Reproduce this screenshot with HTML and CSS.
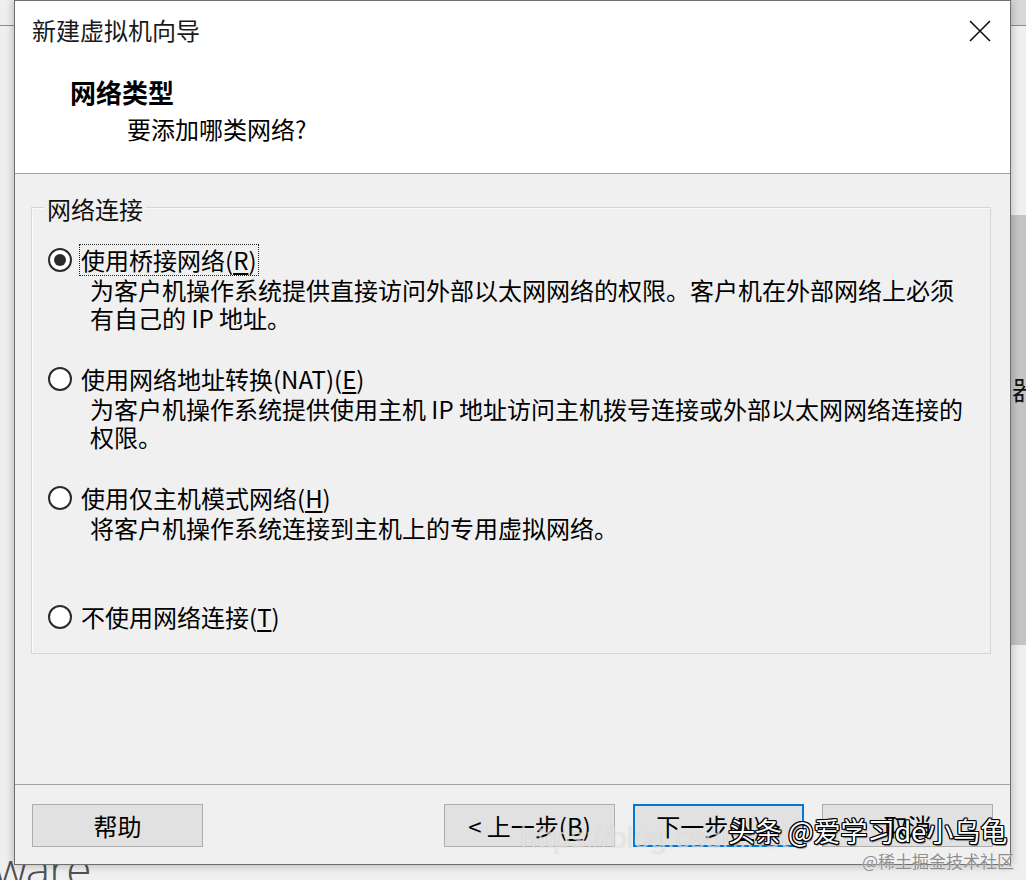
FILE: index.html
```html
<!DOCTYPE html>
<html lang="zh-CN">
<head>
<meta charset="utf-8">
<title>新建虚拟机向导</title>
<link rel="stylesheet" href="styles.css">
</head>
<body>
<div class="desktop">
  <div class="bg-top-right"></div>
  <div class="bg-line bg-line-left"></div>
  <div class="bg-line bg-line-right"></div>
  <div class="bg-panel-right"></div>
  <div class="bg-glyph">器</div>
  <div class="bg-logo">mware</div>

  <div class="dialog">
    <header class="header">
      <div class="titlebar">
        <span class="title">新建虚拟机向导</span>
        <span class="close" aria-label="关闭">
          <svg width="22" height="22" viewBox="0 0 22 22"><path d="M1 1 L21 21 M21 1 L1 21" stroke="#111" stroke-width="1.6" fill="none"/></svg>
        </span>
      </div>
      <h1 class="heading">网络类型</h1>
      <p class="subheading">要添加哪类网络?</p>
    </header>

    <main class="body">
      <div class="group">
        <div class="group-title">网络连接</div>
        <div class="options">
          <div class="option">
            <div class="option-row"><span class="radio checked"></span><span class="label focus">使用桥接网络(<u>R</u>)</span></div>
            <p class="desc">为客户机操作系统提供直接访问外部以太网网络的权限。客户机在外部网络上必须<br>有自己的 IP 地址。</p>
          </div>
          <div class="option">
            <div class="option-row"><span class="radio"></span><span class="label">使用网络地址转换(NAT)(<u>E</u>)</span></div>
            <p class="desc">为客户机操作系统提供使用主机 IP 地址访问主机拨号连接或外部以太网网络连接的<br>权限。</p>
          </div>
          <div class="option">
            <div class="option-row"><span class="radio"></span><span class="label">使用仅主机模式网络(<u>H</u>)</span></div>
            <p class="desc">将客户机操作系统连接到主机上的专用虚拟网络。</p>
          </div>
          <div class="option last">
            <div class="option-row"><span class="radio"></span><span class="label">不使用网络连接(<u>T</u>)</span></div>
          </div>
        </div>
      </div>
    </main>

    <footer class="footer">
      <button class="btn">帮助</button>
      <span class="spacer"></span>
      <button class="btn">&lt; 上一步(<u>B</u>)</button>
      <button class="btn primary">下一步(<u>N</u>) &gt;</button>
      <button class="btn">取消</button>
    </footer>
  </div>

  <div class="wm wm-csdn">https://blog.csdn.net</div>
  <div class="wm wm-toutiao">头条 @爱学习de小乌龟</div>
  <div class="wm wm-juejin">@稀土掘金技术社区</div>
</div>
</body>
</html>
```

FILE: styles.css
```css
* { box-sizing: border-box; }

html, body {
  margin: 0;
  padding: 0;
}

body {
  width: 1026px;
  height: 880px;
  overflow: hidden;
  background: #ececec;
  font-family: "Noto Sans CJK SC", "Noto Sans", sans-serif;
  color: #000;
}

.desktop {
  position: relative;
  width: 1026px;
  height: 880px;
  overflow: hidden;
  background: #efefef;
}

/* background window pieces behind the dialog */
.bg-top-right {
  position: absolute;
  left: 1000px;
  top: 0;
  width: 26px;
  height: 25px;
  background: #d8d8d8;
}
.bg-line {
  position: absolute;
  top: 25px;
  height: 1px;
  background: #8c8c8c;
}
.bg-line-left { left: 0; width: 20px; }
.bg-line-right { left: 1000px; width: 26px; }

.bg-panel-right {
  position: absolute;
  left: 1000px;
  top: 215px;
  width: 26px;
  height: 430px;
  background: #c4c4c4;
}
.bg-glyph {
  position: absolute;
  left: 1012px;
  top: 376px;
  font-size: 26px;
  line-height: 26px;
  color: #111;
}
.bg-logo {
  position: absolute;
  left: -46px;
  top: 838px;
  font-family: "Open Sans", "Noto Sans", sans-serif;
  font-weight: 300;
  font-size: 46px;
  line-height: 60px;
  color: #505050;
  letter-spacing: -1px;
}

/* dialog window */
.dialog {
  position: absolute;
  left: 14px;
  top: 0;
  width: 997px;
  height: 865px;
  border: 1px solid #6e6e6e;
  background: #f0f0f0;
  display: flex;
  flex-direction: column;
  box-shadow: 0 0 9px rgba(0, 0, 0, 0.28);
}

.header {
  height: 173px;
  flex: none;
  background: #fff;
  border-bottom: 1px solid #a3a3a3;
}

.titlebar {
  height: 58px;
  display: flex;
  align-items: center;
  justify-content: space-between;
  padding: 0 19px 0 17px;
}
.title {
  font-size: 24px;
  line-height: 30px;
  color: #1a1a1a;
}
.close {
  display: flex;
  width: 22px;
  height: 22px;
  margin-top: 2px;
}

.heading {
  margin: 18px 0 0 55px;
  font-size: 26px;
  line-height: 30px;
  font-weight: 700;
}
.subheading {
  margin: 7px 0 0 112px;
  font-size: 24px;
  line-height: 30px;
}

.body {
  flex: 1;
  padding: 0 19px 0 16px;
}

.group {
  margin-top: 33px;
  border: 1px solid #d6d6d6;
  box-shadow: inset 1px 1px 0 #fafafa;
  padding: 0 16px 20px 16px;
}
.group-title {
  width: max-content;
  margin: -13px 0 0 -4px;
  padding: 0 3px;
  background: #f0f0f0;
  font-size: 24px;
  line-height: 28px;
  color: #111;
}

.options {
  margin-top: 21px;
}
.option {
  margin-bottom: 31px;
}
.option.last {
  margin-bottom: 0;
}
.option-row {
  display: flex;
  align-items: center;
  height: 32px;
}
.radio {
  flex: none;
  width: 24px;
  height: 24px;
  border: 2px solid #2b2b2b;
  border-radius: 50%;
  background: #fff;
  display: flex;
  align-items: center;
  justify-content: center;
}
.radio.checked::after {
  content: "";
  width: 12px;
  height: 12px;
  border-radius: 50%;
  background: #2b2b2b;
}
.label {
  margin-left: 7px;
  padding: 0 1px;
  border: 1px dotted transparent;
  font-size: 24px;
  line-height: 30px;
  white-space: nowrap;
}
.label.focus {
  border-color: #222;
}
.label u {
  text-underline-offset: 3px;
}

.desc {
  margin: 0 0 0 42px;
  height: 56px;
  font-size: 24px;
  line-height: 28px;
  white-space: nowrap;
}

.footer {
  flex: none;
  height: 80px;
  border-top: 1px solid #a3a3a3;
  padding: 19px 17px 0 17px;
  display: flex;
  align-items: flex-start;
  gap: 18px;
}
.spacer {
  flex: 1;
}
.btn {
  width: 171px;
  height: 43px;
  background: #e1e1e1;
  border: 1px solid #adadad;
  font-family: "Noto Sans CJK SC", "Noto Sans", sans-serif;
  font-size: 24px;
  line-height: 30px;
  color: #000;
  padding: 0;
}
.btn.primary {
  border: 2px solid #0078d7;
}
.btn u {
  text-underline-offset: 3px;
}

/* watermarks */
.wm {
  position: absolute;
  white-space: nowrap;
}
.wm-csdn {
  left: 520px;
  top: 818px;
  font-family: "Liberation Sans", sans-serif;
  font-size: 30px;
  line-height: 40px;
  color: rgba(255, 255, 255, 0.55);
  text-shadow: 0 0 1px rgba(120, 120, 120, 0.35);
}
.wm-toutiao {
  left: 728px;
  top: 813px;
  font-size: 27px;
  line-height: 36px;
  color: #fff;
  text-shadow:
    -1px -1px 0 #000, 1px -1px 0 #000, -1px 1px 0 #000, 1px 1px 0 #000,
    0 -1px 0 #000, 0 1px 0 #000, -1px 0 0 #000, 1px 0 0 #000,
    1px 2px 1px rgba(0, 0, 0, 0.5);
}
.wm-juejin {
  left: 862px;
  top: 849px;
  font-size: 17px;
  line-height: 24px;
  color: #8e8e8e;
  text-shadow: 0 0 1px #fff;
}
```
